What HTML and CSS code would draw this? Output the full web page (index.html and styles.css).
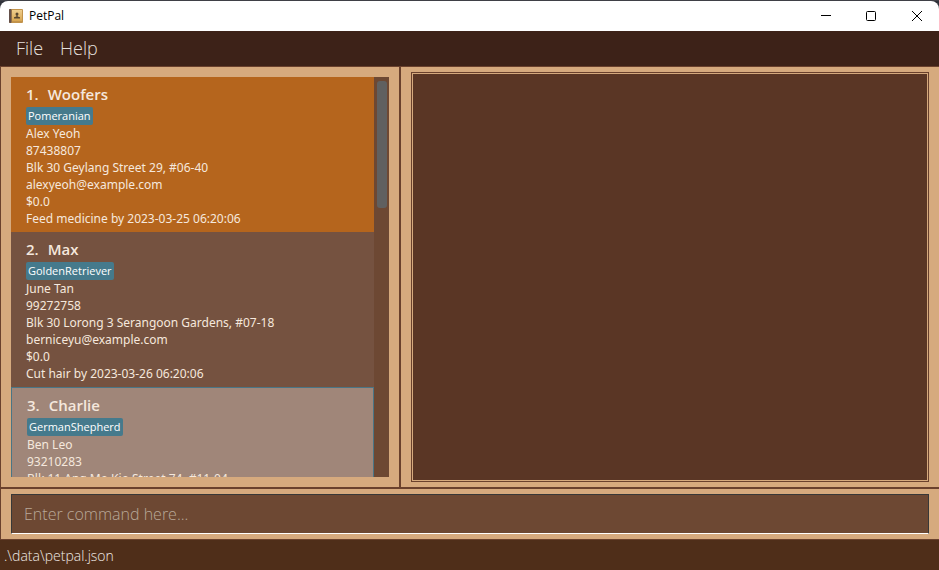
FILE: index.html
```html
<!DOCTYPE html>
<html lang="en">
<head>
<meta charset="utf-8">
<title>PetPal</title>
<link rel="stylesheet" href="styles.css">
</head>
<body>
<div class="window">
  <header class="titlebar">
    <svg class="app-icon" viewBox="0 0 14 14" aria-hidden="true">
      <defs>
        <linearGradient id="cover" x1="0" y1="0" x2="0" y2="1">
          <stop offset="0" stop-color="#efce8e"/>
          <stop offset="1" stop-color="#d8a650"/>
        </linearGradient>
      </defs>
      <rect width="14" height="14" rx="1" fill="#c2934b"/>
      <rect width="2.500" height="14" rx="1" fill="#64504a"/>
      <rect x="3" y="1" width="10" height="11" fill="url(#cover)"/>
      <circle cx="8" cy="5" r="1.500" fill="#57452f"/>
      <path d="M7.4 6h1.200v1.600l2.400.6V9.600H5V8.200l2.400-.6z" fill="#57452f"/>
    </svg>
    <h1 class="app-name">PetPal</h1>
    <div class="controls">
      <button class="control" type="button" aria-label="Minimize"><svg viewBox="0 0 11 11"><path d="M0 4.500h10"/></svg></button>
      <button class="control" type="button" aria-label="Maximize"><svg viewBox="0 0 11 11"><rect x=".5" y=".5" width="9" height="9" rx="1"/></svg></button>
      <button class="control" type="button" aria-label="Close"><svg viewBox="0 0 11 11"><path d="M1 0l10 10M11 0L1 10"/></svg></button>
    </div>
  </header>
  <nav class="menubar">
    <button class="menu" type="button">File</button>
    <button class="menu" type="button">Help</button>
  </nav>
  <main class="split">
    <section class="list-pane">
      <div class="list-view">
        <ol class="pets">
          <li class="pet pet-odd">
            <h2 class="pet-name"><span>1.</span><span>Woofers</span></h2>
            <span class="tag">Pomeranian</span>
            <p>Alex Yeoh</p>
            <p>87438807</p>
            <p>Blk 30 Geylang Street 29, #06-40</p>
            <p>alexyeoh@example.com</p>
            <p>$0.0</p>
            <p>Feed medicine by 2023-03-25 06:20:06</p>
          </li>
          <li class="pet pet-even">
            <h2 class="pet-name"><span>2.</span><span>Max</span></h2>
            <span class="tag">GoldenRetriever</span>
            <p>June Tan</p>
            <p>99272758</p>
            <p>Blk 30 Lorong 3 Serangoon Gardens, #07-18</p>
            <p>berniceyu@example.com</p>
            <p>$0.0</p>
            <p>Cut hair by 2023-03-26 06:20:06</p>
          </li>
          <li class="pet pet-selected">
            <h2 class="pet-name"><span>3.</span><span>Charlie</span></h2>
            <span class="tag">GermanShepherd</span>
            <p>Ben Leo</p>
            <p>93210283</p>
            <p>Blk 11 Ang Mo Kio Street 74, #11-04</p>
          </li>
        </ol>
        <div class="scrollbar"><div class="thumb"></div></div>
      </div>
    </section>
    <section class="result-pane">
      <div class="result"></div>
    </section>
  </main>
  <form class="command-bar">
    <input class="command" type="text" aria-label="Command" placeholder="Enter command here...">
  </form>
  <footer class="statusbar">.\data\petpal.json</footer>
</div>
</body>
</html>
```
FILE: styles.css
```css
* { box-sizing: border-box; }

body {
  margin: 0;
  background: #30323a;
  font-family: "Open Sans", "Noto Sans", sans-serif;
}

h1, h2, p, ol { margin: 0; padding: 0; }

button { font: inherit; border: 0; background: none; }

.window {
  display: flex;
  flex-direction: column;
  height: 100vh;
  border-top: 1px solid #3f4046;
}

.titlebar {
  display: flex;
  align-items: center;
  flex: none;
  height: 30px;
  padding-left: 9px;
  background: #fff;
  border-radius: 8px 8px 0 0;
}

.app-icon { width: 14px; height: 14px; }

.app-name {
  margin-left: 6px;
  font-size: 12px;
  font-weight: 400;
  line-height: 16px;
  color: #000;
}

.controls { display: flex; height: 100%; margin-left: auto; }

.control {
  display: grid;
  place-items: center;
  width: 45px;
  padding: 0;
}

.control svg {
  width: 11px;
  height: 11px;
  fill: none;
  stroke: #000;
}

.menubar {
  display: flex;
  flex: none;
  gap: 17px;
  height: 35px;
  padding: 0 16px 2px;
  background: #3d2218;
}

.menu {
  padding: 0;
  font-size: 18px;
  font-weight: 300;
  color: #e6e0dd;
}

.split {
  display: grid;
  grid-template-columns: 401fr 538fr;
  grid-template-rows: minmax(0, 1fr);
  flex: 1;
  min-height: 0;
  border-top: 1px solid #6a412d;
  border-bottom: 2px solid #6a412d;
  background: #d6aa7e;
}

.list-pane {
  min-width: 0;
  padding: 10px;
  border: solid #6a412d;
  border-width: 0 2px 0 1px;
}

.list-view {
  display: flex;
  height: 100%;
  overflow: hidden;
  background: #6d4833;
}

.pets { flex: 1; min-width: 0; list-style: none; }

.pet {
  padding: 5px 15px;
  font-family: "Noto Sans", "Open Sans", sans-serif;
  font-size: 12px;
  line-height: 17px;
  color: #f5e8dd;
  white-space: nowrap;
}

.pet-odd { background: #b5651d; }
.pet-even { background: #755240; }
.pet-selected { background: #a08679; border: 1px solid #4a7585; }

.pet-name {
  display: flex;
  gap: 9px;
  padding-bottom: 1px;
  font-family: "Open Sans", "Noto Sans", sans-serif;
  font-size: 15px;
  font-weight: 600;
  line-height: 24px;
}

.tag {
  display: block;
  width: fit-content;
  padding: 0 2px;
  border-radius: 2px;
  background: #457a8c;
  font-family: "Open Sans", "Noto Sans", sans-serif;
  font-size: 11px;
  line-height: 18px;
  color: #fff;
}

.scrollbar { width: 15px; padding: 4px 2px 4px 3px; }

.thumb {
  height: 127px;
  border-radius: 3px;
  background: #606060;
}

.result-pane { padding: 5px 10px; }

.result {
  height: 100%;
  border: 1px solid #6a412d;
  background: #5a3625;
  box-shadow: inset 0 0 0 1px #d6aa7e;
}

.command-bar {
  flex: none;
  padding: 5px 10px;
  border-left: 1px solid #6a412d;
  background: #d6aa7e;
}

.command {
  display: block;
  width: 100%;
  height: 40px;
  padding: 0 12px;
  border: 1px solid #383838;
  border-bottom-color: #fff;
  border-radius: 0;
  background: #6d4833;
  font-family: inherit;
  font-size: 16px;
  font-weight: 300;
  color: #fff;
}

.command::placeholder { color: #b9a999; opacity: 1; }

.statusbar {
  flex: none;
  height: 31px;
  padding: 1px 4px 0;
  border-top: 1px solid #6a412d;
  background: #4f2e19;
  font-size: 14px;
  font-weight: 300;
  line-height: 29px;
  color: #f0eae6;
}
```
